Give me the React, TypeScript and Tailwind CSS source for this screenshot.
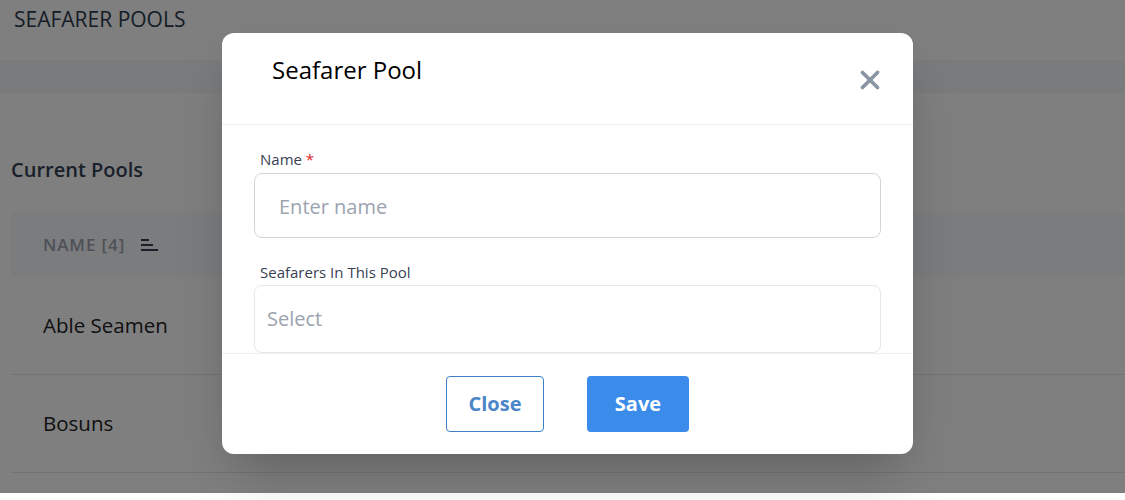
import { X } from 'lucide-react'

const POOLS = ['Able Seamen', 'Bosuns']

function SortIcon() {
  return (
    <svg width="18" height="16" viewBox="0 0 18 16" className="text-[#334155]">
      <rect x="0" y="2" width="8" height="2" fill="currentColor" />
      <rect x="0" y="7" width="12" height="2" fill="currentColor" />
      <rect x="0" y="12" width="17" height="2" fill="currentColor" />
    </svg>
  )
}

export default function App() {
  return (
    <div className="relative w-[1125px] h-[500px] overflow-hidden bg-white" style={{ fontFamily: '"Open Sans", "Noto Sans", sans-serif' }}>
      {/* Page under the overlay */}
      <div className="h-[60px] px-[14px] pt-[4px]">
        <h1 className="text-[21px] font-medium text-[#2d3a4f]">SEAFARER POOLS</h1>
      </div>
      <div className="h-[33px] bg-[#f5f7fa]" />
      <div className="pl-[11px] pt-[62px]">
        <h2 className="text-[20px] font-semibold text-[#334155] mb-[27px]">Current Pools</h2>
        <div className="h-[65px] bg-[#f7f8fa] flex items-center gap-4 pl-8">
          <span className="text-[17px] font-semibold text-[#9ca3af] tracking-[0.9px]">NAME [4]</span>
          <SortIcon />
        </div>
        {POOLS.map((p) => (
          <div key={p} className="h-[98px] flex items-center pl-8 border-b border-[#e5e7eb]">
            <span className="text-[20.5px] text-[#222]">{p}</span>
          </div>
        ))}
      </div>

      {/* Overlay */}
      <div className="absolute left-0 top-0 right-0 h-[493px] bg-black/50" />

      {/* Modal */}
      <div className="absolute left-[222px] top-[33px] w-[691px] h-[421px] bg-white rounded-xl shadow-2xl flex flex-col overflow-hidden">
        <div className="h-[92px] shrink-0 flex items-start justify-between pl-[50px] pr-[28px] border-b border-[#eceef1]">
          <h3 className="text-[24px] text-black pt-[19px]">Seafarer Pool</h3>
          <X size={30} strokeWidth={3} className="text-[#8a94a3] mt-[32px]" />
        </div>
        <div className="h-[228px] shrink-0 overflow-hidden px-8 pt-[23px]">
          <label className="block text-[15px] text-[#374151] ml-[6px] mb-[2px]">
            Name <span className="text-[#dc2626]">*</span>
          </label>
          <div className="h-[65px] border border-[#d1d5db] rounded-lg flex items-center pl-6 pt-[3px]">
            <span className="text-[20px] text-[#9ca3af]">Enter name</span>
          </div>
          <label className="block text-[15px] text-[#374151] ml-[6px] mt-[23px] mb-[2px]">Seafarers In This Pool</label>
          <div className="h-[68px] border border-[#e5e7eb] rounded-lg flex items-center pl-3">
            <span className="text-[20px] text-[#9ca3af]">Select</span>
          </div>
        </div>
        <div className="flex-1 border-t border-[#eceef1] flex items-start justify-center gap-[43px] pt-[22px]">
          <button className="w-[98px] h-[56px] rounded border border-[#3b82c4] text-[#4a86c8] text-[20px] font-bold">Close</button>
          <button className="w-[102px] h-[56px] rounded bg-[#3b8beb] text-white text-[20px] font-bold">Save</button>
        </div>
      </div>
    </div>
  )
}
